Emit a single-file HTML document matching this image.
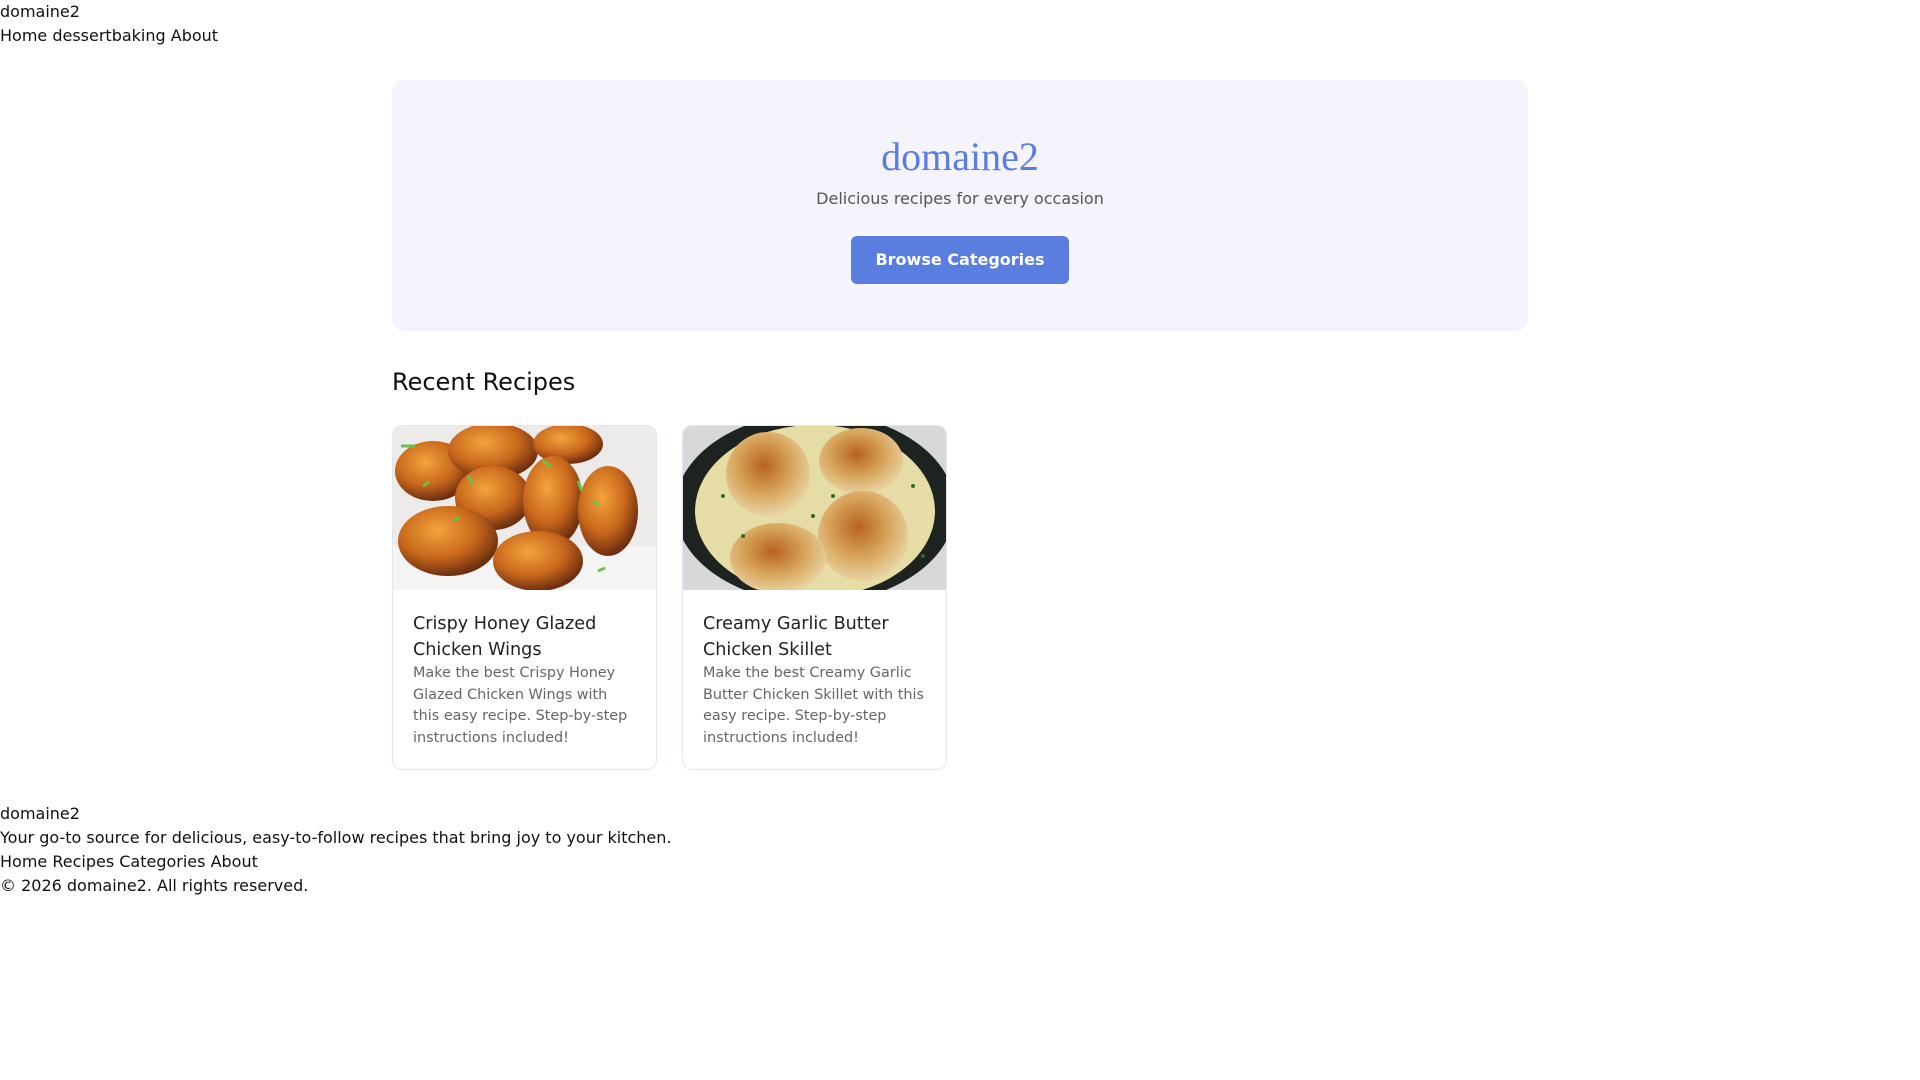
<!DOCTYPE html>
<html><head><meta charset="utf-8">
<style>
*{box-sizing:border-box;margin:0;padding:0}
html,body{width:1920px;height:1080px;background:#fff;overflow:hidden}
body{font-family:"DejaVu Sans","Liberation Sans",sans-serif;font-size:16px;line-height:24px;color:#111}
.wrap{width:1136px;margin:32px 0 0 392px}
.hero{background:#f5f4fc;border-radius:12px;height:251px;padding-top:53px;text-align:center}
.hero h1{font-family:"Liberation Serif",serif;font-weight:normal;font-size:40px;line-height:48px;color:#5a7de0}
.hero p{color:#555;margin-top:6px}
.btn{display:inline-block;margin-top:25px;width:218px;height:48px;line-height:48px;background:#5a7de0;color:#fff;font-weight:bold;border-radius:6px;font-size:16px}
h2{font-weight:normal;font-size:24px;line-height:29px;margin-top:37px}
.cards{display:flex;gap:25px;margin-top:28px}
.card{width:265px;height:345px;border:1px solid #e3e6f6;border-radius:10px;overflow:hidden;background:#fff}
.card svg{display:block;width:265px;height:164px}
.body{padding:21px 20px 18px}
.body h3{font-weight:normal;font-size:17.6px;line-height:26px;color:#222}
.body p{font-size:14.4px;line-height:21.6px;color:#666}
footer{margin-top:32px}
</style></head><body>
<div>domaine2</div>
<div>Home dessertbaking About</div>
<div class="wrap">
<div class="hero"><h1>domaine2</h1><p>Delicious recipes for every occasion</p><span class="btn">Browse Categories</span></div>
<h2>Recent Recipes</h2>
<div class="cards">
<div class="card">
<svg viewBox="0 0 265 164" preserveAspectRatio="none">
<defs><radialGradient id="w" cx="40%" cy="35%" r="65%"><stop offset="0" stop-color="#f3a43c"/><stop offset=".6" stop-color="#c8671c"/><stop offset="1" stop-color="#6e2f10"/></radialGradient></defs>
<rect width="265" height="164" fill="#ecebea"/>
<rect x="0" y="120" width="265" height="44" fill="#f4f4f4"/>
<ellipse cx="40" cy="45" rx="38" ry="30" fill="url(#w)"/>
<ellipse cx="100" cy="25" rx="45" ry="28" fill="url(#w)"/>
<ellipse cx="175" cy="18" rx="35" ry="20" fill="url(#w)"/>
<ellipse cx="100" cy="72" rx="38" ry="32" fill="url(#w)"/>
<ellipse cx="160" cy="75" rx="30" ry="45" fill="url(#w)"/>
<ellipse cx="215" cy="85" rx="30" ry="45" fill="url(#w)"/>
<ellipse cx="55" cy="115" rx="50" ry="35" fill="url(#w)"/>
<ellipse cx="145" cy="135" rx="45" ry="30" fill="url(#w)"/>
<g stroke="#6bc24a" stroke-width="3"><path d="M8 20h14M75 50l5 8M185 55l4 10M60 95l6-4M200 75l6 4M150 35l8 6M30 60l6-4M205 145l7-3"/></g>
</svg>
<div class="body"><h3>Crispy Honey Glazed Chicken Wings</h3><p>Make the best Crispy Honey Glazed Chicken Wings with this easy recipe. Step-by-step instructions included!</p></div>
</div>
<div class="card">
<svg viewBox="0 0 265 164" preserveAspectRatio="none">
<defs><radialGradient id="t" cx="45%" cy="40%" r="60%"><stop offset="0" stop-color="#b8621e"/><stop offset=".55" stop-color="#d7a45a"/><stop offset="1" stop-color="#e8d3a2"/></radialGradient></defs>
<rect width="265" height="164" fill="#d8d8d8"/>
<ellipse cx="132" cy="82" rx="140" ry="95" fill="#1d2420"/>
<ellipse cx="132" cy="85" rx="120" ry="86" fill="#e6dca6"/>
<ellipse cx="85" cy="48" rx="42" ry="42" fill="url(#t)"/>
<ellipse cx="178" cy="35" rx="42" ry="33" fill="url(#t)"/>
<ellipse cx="180" cy="110" rx="45" ry="45" fill="url(#t)"/>
<ellipse cx="95" cy="132" rx="48" ry="35" fill="url(#t)"/>
<g fill="#2f6a2a"><circle cx="40" cy="70" r="2"/><circle cx="130" cy="90" r="2"/><circle cx="230" cy="60" r="2"/><circle cx="60" cy="110" r="2"/><circle cx="150" cy="70" r="2"/><circle cx="240" cy="130" r="2"/></g>
</svg>
<div class="body"><h3>Creamy Garlic Butter Chicken Skillet</h3><p>Make the best Creamy Garlic Butter Chicken Skillet with this easy recipe. Step-by-step instructions included!</p></div>
</div>
</div>
</div>
<footer>
<div>domaine2</div>
<div>Your go-to source for delicious, easy-to-follow recipes that bring joy to your kitchen.</div>
<div>Home Recipes Categories About</div>
<div>© 2026 domaine2. All rights reserved.</div>
</footer>
</body></html>
